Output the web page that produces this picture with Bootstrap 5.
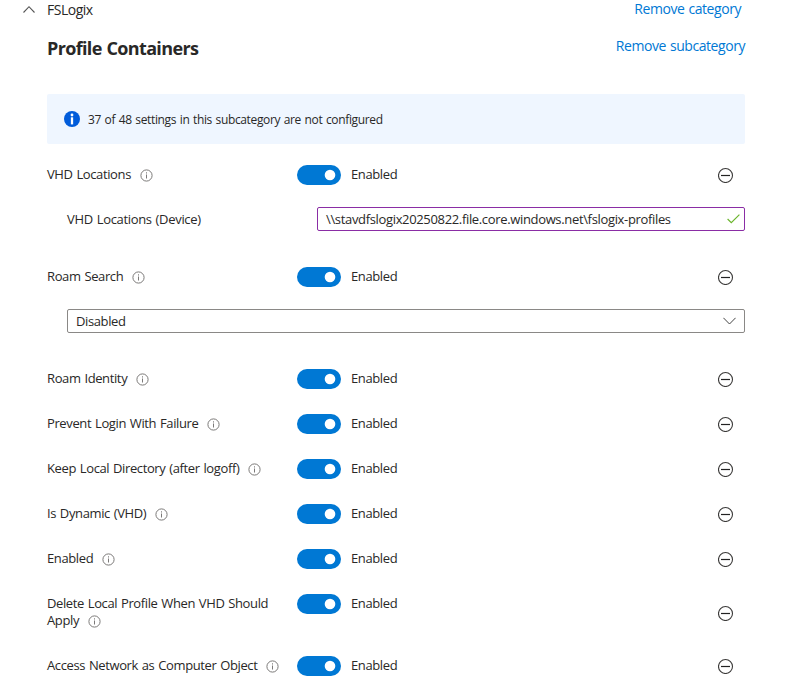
<!DOCTYPE html>
<html lang="en">
<head>
<meta charset="utf-8">
<meta name="viewport" content="width=device-width, initial-scale=1">
<title>FSLogix settings</title>
<link href="https://cdn.jsdelivr.net/npm/bootstrap@5.3.0/dist/css/bootstrap.min.css" rel="stylesheet">
<style>
body{font-family:"Segoe UI","Open Sans","Noto Sans",sans-serif;font-size:13px;line-height:17px;color:#292827;letter-spacing:-.38px;word-spacing:.8px;background:#fff;overflow:hidden}
.page-col{width:745px;padding-left:47px}
.cat-head{height:18px;margin-left:-24px;padding-right:4px}
.cat-name{margin-left:12px;font-size:14px;letter-spacing:-.5px}
.act{color:#0078d4;font-size:14px;letter-spacing:-.44px;line-height:20px}
.sub-head{height:42px;margin-top:18px}
.sub-title{font-size:18px;line-height:24px;font-weight:700;letter-spacing:-.65px;margin:0}
.notice{height:50px;margin-top:16px;padding-left:17px;background:#eff6ff;border-radius:2px;font-size:12px;letter-spacing:-.35px}
.notice svg{margin-right:8px}
.rows{padding-top:21px}
.setting{min-height:20px;margin-bottom:25px}
.setting-name{width:250px;padding-right:12px;padding-top:1px}
.tall{height:37px}
.info{margin-left:9px;vertical-align:-2.5px}
.form-switch.tog{padding:0;margin:0;min-height:20px;height:20px}
.tog .form-check-input{width:44px;height:20px;margin:0;float:none;display:block;border:0;background-color:#0078d4!important;background-image:url("data:image/svg+xml,%3csvg xmlns='http://www.w3.org/2000/svg' viewBox='0 0 44 20'%3e%3ccircle cx='33' cy='10' r='5.3' fill='white'/%3e%3c/svg%3e")!important;background-size:44px 20px;background-position:center!important}
.state{margin-left:10px;padding-top:1px}
.minus{margin-right:11px}
.field-row{height:24px;margin:-3px 0 36px 20px}
.device-name{letter-spacing:-.32px}
.field{height:24px;border:1px solid #8a2da5;border-radius:2px;padding:0 4px 0 8px;background:#fff}
.device{width:428px}
.url-text{letter-spacing:-.34px}
.pick{border-color:#8a8886;padding-left:8px;padding-right:8px}
</style>
</head>
<body>
<svg class="d-none" xmlns="http://www.w3.org/2000/svg">
<symbol id="i" viewBox="0 0 13 13"><circle cx="6.5" cy="6.5" r="5.6" fill="none" stroke="#7b7978"/><path d="M6.5 5.5v4M6.5 3.3v1.2" stroke="#7b7978"/></symbol>
<symbol id="m" viewBox="0 0 16 16"><circle cx="7.5" cy="8.5" r="7" fill="none" stroke="#3b3a39" stroke-width="1.1"/><path d="M3 8.5h9" stroke="#222" stroke-width="1.2"/></symbol>
</svg>
<main class="page-col">
<header class="cat-head d-flex justify-content-between align-items-center">
<div class="d-flex align-items-center"><svg width="12" height="8" viewBox="0 0 12 8"><path d="M.5 7.5 6 1.7 11.5 7.5" fill="none" stroke="#555" stroke-width="1.1"/></svg><span class="cat-name">FSLogix</span></div>
<a class="act text-decoration-none" href="#">Remove category</a>
</header>
<div class="sub-head d-flex justify-content-between align-items-start"><h2 class="sub-title">Profile Containers</h2><a class="act text-decoration-none" href="#">Remove subcategory</a></div>
<div class="notice d-flex align-items-center"><svg width="16" height="16" viewBox="0 0 16 16"><circle cx="8" cy="8" r="8" fill="#015cda"/><circle cx="8" cy="4" r="1.4" fill="#fff"/><path d="M8 6.3V13.4" stroke="#fff" stroke-width="2.3"/></svg><span>37 of 48 settings in this subcategory are not configured</span></div>
<section class="rows">
<div class="setting d-flex"><div class="setting-name"><span class="t">VHD Locations</span><svg class="info" width="13" height="13"><use href="#i"/></svg></div><div class="form-check form-switch tog"><input class="form-check-input" type="checkbox" role="switch" checked aria-label="VHD Locations"></div><span class="state">Enabled</span><svg class="minus ms-auto align-self-center" width="16" height="16"><use href="#m"/></svg></div>
<div class="field-row d-flex align-items-center justify-content-between"><label class="device-name">VHD Locations (Device)</label><div class="field device d-flex align-items-center justify-content-between"><span class="url-text">\\stavdfslogix20250822.file.core.windows.net\fslogix-profiles</span><svg width="13" height="10" viewBox="0 0 13 10"><path d="M.6 5 4.3 8.6 12.4.6" fill="none" stroke="#6bb52d" stroke-width="1.2"/></svg></div></div>
<div class="setting d-flex"><div class="setting-name"><span class="t">Roam Search</span><svg class="info" width="13" height="13"><use href="#i"/></svg></div><div class="form-check form-switch tog"><input class="form-check-input" type="checkbox" role="switch" checked aria-label="Roam Search"></div><span class="state">Enabled</span><svg class="minus ms-auto align-self-center" width="16" height="16"><use href="#m"/></svg></div>
<div class="field-row"><div class="field pick d-flex align-items-center justify-content-between"><span>Disabled</span><svg width="13" height="8" viewBox="0 0 13 8"><path d="M.4.8 6.5 7 12.6.8" fill="none" stroke="#444"/></svg></div></div>
<div class="setting d-flex"><div class="setting-name"><span class="t">Roam Identity</span><svg class="info" width="13" height="13"><use href="#i"/></svg></div><div class="form-check form-switch tog"><input class="form-check-input" type="checkbox" role="switch" checked aria-label="Roam Identity"></div><span class="state">Enabled</span><svg class="minus ms-auto align-self-center" width="16" height="16"><use href="#m"/></svg></div>
<div class="setting d-flex"><div class="setting-name"><span class="t">Prevent Login With Failure</span><svg class="info" width="13" height="13"><use href="#i"/></svg></div><div class="form-check form-switch tog"><input class="form-check-input" type="checkbox" role="switch" checked aria-label="Prevent Login With Failure"></div><span class="state">Enabled</span><svg class="minus ms-auto align-self-center" width="16" height="16"><use href="#m"/></svg></div>
<div class="setting d-flex"><div class="setting-name"><span class="t">Keep Local Directory (after logoff)</span><svg class="info" width="13" height="13"><use href="#i"/></svg></div><div class="form-check form-switch tog"><input class="form-check-input" type="checkbox" role="switch" checked aria-label="Keep Local Directory"></div><span class="state">Enabled</span><svg class="minus ms-auto align-self-center" width="16" height="16"><use href="#m"/></svg></div>
<div class="setting d-flex"><div class="setting-name"><span class="t">Is Dynamic (VHD)</span><svg class="info" width="13" height="13"><use href="#i"/></svg></div><div class="form-check form-switch tog"><input class="form-check-input" type="checkbox" role="switch" checked aria-label="Is Dynamic"></div><span class="state">Enabled</span><svg class="minus ms-auto align-self-center" width="16" height="16"><use href="#m"/></svg></div>
<div class="setting d-flex"><div class="setting-name"><span class="t">Enabled</span><svg class="info" width="13" height="13"><use href="#i"/></svg></div><div class="form-check form-switch tog"><input class="form-check-input" type="checkbox" role="switch" checked aria-label="Enabled"></div><span class="state">Enabled</span><svg class="minus ms-auto align-self-center" width="16" height="16"><use href="#m"/></svg></div>
<div class="setting tall d-flex"><div class="setting-name"><span class="t">Delete Local Profile When VHD Should<br>Apply</span><svg class="info" width="13" height="13"><use href="#i"/></svg></div><div class="form-check form-switch tog"><input class="form-check-input" type="checkbox" role="switch" checked aria-label="Delete Local Profile"></div><span class="state">Enabled</span><svg class="minus ms-auto align-self-center" width="16" height="16"><use href="#m"/></svg></div>
<div class="setting d-flex"><div class="setting-name"><span class="t">Access Network as Computer Object</span><svg class="info" width="13" height="13"><use href="#i"/></svg></div><div class="form-check form-switch tog"><input class="form-check-input" type="checkbox" role="switch" checked aria-label="Access Network"></div><span class="state">Enabled</span><svg class="minus ms-auto align-self-center" width="16" height="16"><use href="#m"/></svg></div>
</section>
</main>
<script src="https://cdn.jsdelivr.net/npm/bootstrap@5.3.0/dist/js/bootstrap.bundle.min.js"></script>
</body>
</html>
